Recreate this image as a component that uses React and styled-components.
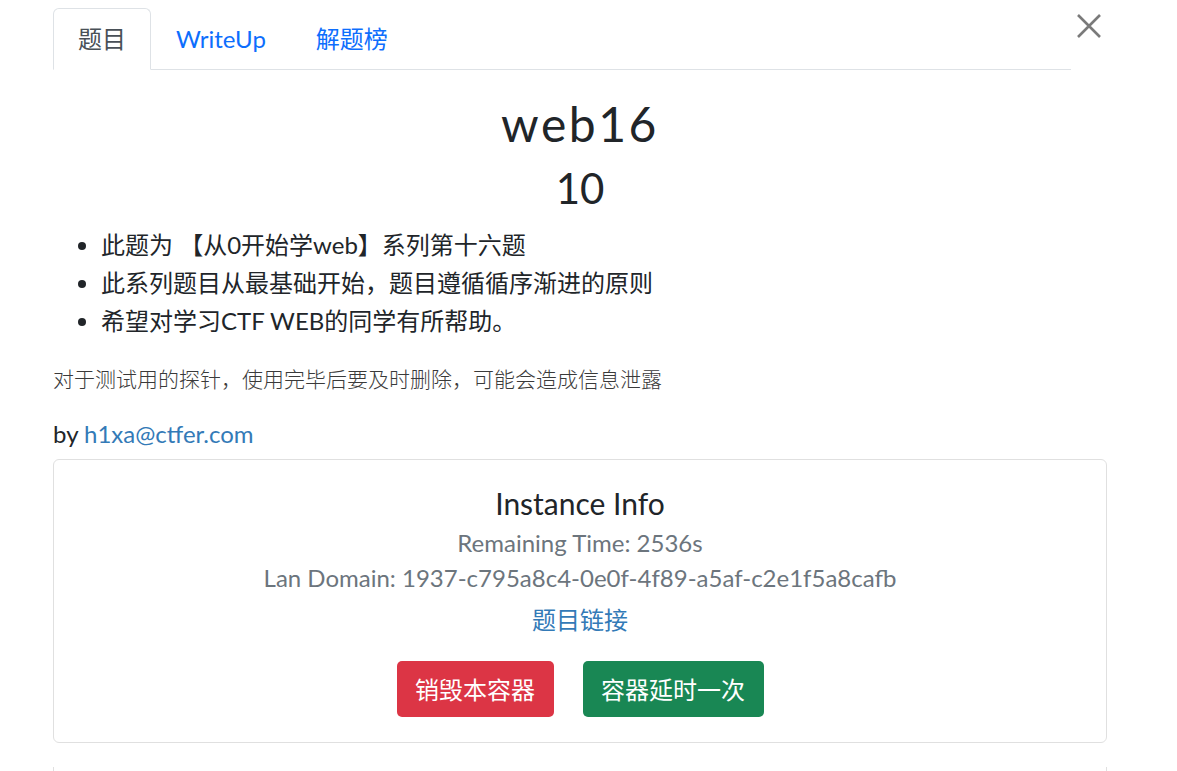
import React from 'react';
import styled, { createGlobalStyle } from 'styled-components';

const GlobalStyle = createGlobalStyle`
  body {
    margin: 0;
    background: #fff;
    font-family: Lato, "Noto Sans CJK SC", sans-serif;
    color: #212529;
  }
`;

const Page = styled.div`
  width: 1054px;
  padding: 8px 0 0 53px;
  height: 763px;
  overflow: hidden;
`;

const Header = styled.div`
  display: flex;
  align-items: flex-start;
`;

const Tabs = styled.ul`
  flex: 1;
  display: flex;
  margin: 0;
  padding: 0;
  list-style: none;
  border-bottom: 1px solid #dee2e6;
`;

const Tab = styled.li`
  margin-bottom: -1px;
  padding: 12px 24px;
  font-size: 24px;
  line-height: 36px;
  border: 1px solid ${p => (p.$active ? '#dee2e6' : 'transparent')};
  border-bottom-color: ${p => (p.$active ? '#fff' : 'transparent')};
  border-radius: 6px 6px 0 0;
  background: ${p => (p.$active ? '#fff' : 'transparent')};
  color: ${p => (p.$active ? '#495057' : '#0d6efd')};
  cursor: pointer;
`;

const CloseButton = styled.button`
  width: 36px;
  display: flex;
  justify-content: center;
  padding: 6px 0 0;
  border: 0;
  background: none;
  cursor: pointer;
`;

const Title = styled.h2`
  margin: 25px 0 0;
  text-align: center;
  font-size: 48px;
  font-weight: 400;
  line-height: 1.2;
  letter-spacing: 2.5px;
`;

const Points = styled.h3`
  margin: 10px 0 0;
  text-align: center;
  font-size: 42px;
  font-weight: 400;
  line-height: 1.2;
`;

const Bullets = styled.ul`
  margin: 13px 0 0;
  padding-left: 48px;
  font-size: 24px;
  line-height: 38px;
`;

const Note = styled.p`
  margin: 22px 0 0;
  font-family: "Noto Sans CJK SC", sans-serif;
  font-weight: 300;
  font-size: 21px;
  line-height: 32px;
  color: #3a3a3a;
`;

const Author = styled.p`
  margin: 22px 0 0;
  font-size: 24px;
  line-height: 36px;
`;

const Link = styled.a`
  color: #337ab7;
  text-decoration: none;
`;

const Card = styled.div`
  margin-top: 7px;
  border: 1px solid #e0e0e0;
  border-radius: 6px;
  padding: 25px 20px 25px;
  text-align: center;
`;

const CardTitle = styled.h5`
  margin: 0;
  font-size: 30px;
  font-weight: 400;
  line-height: 36px;
`;

const Muted = styled.div`
  font-size: 24px;
  line-height: 35px;
  color: #6c757d;
  &:first-of-type {
    margin-top: 4px;
  }
`;

const LinkRow = styled.div`
  margin-top: 7px;
  font-size: 24px;
  line-height: 36px;
`;

const Actions = styled.div`
  margin-top: 23px;
  display: flex;
  justify-content: center;
  gap: 29px;
`;

const Button = styled.button`
  height: 56px;
  padding: 0 18.5px;
  border: 0;
  border-radius: 5px;
  font-family: Lato, "Noto Sans CJK SC", sans-serif;
  font-size: 24px;
  color: #fff;
  background: ${p => (p.$variant === 'danger' ? '#dc3545' : '#198754')};
  cursor: pointer;
`;

const NextBlock = styled.div`
  margin-top: 24px;
  height: 40px;
  border-left: 1px solid #e0e0e0;
  border-right: 1px solid #e0e0e0;
`;

export default function App() {
  return (
    <>
      <GlobalStyle />
      <Page>
        <Header>
          <Tabs>
            <Tab $active>题目</Tab>
            <Tab>WriteUp</Tab>
            <Tab>解题榜</Tab>
          </Tabs>
          <CloseButton aria-label="Close">
            <svg width="24" height="24" viewBox="0 0 24 24">
              <path d="M1 1L23 23M23 1L1 23" stroke="#7a7a7a" strokeWidth="2.6" />
            </svg>
          </CloseButton>
        </Header>

        <Title>web16</Title>
        <Points>10</Points>
        <Bullets>
          <li>此题为 【从0开始学web】系列第十六题</li>
          <li>此系列题目从最基础开始，题目遵循循序渐进的原则</li>
          <li>希望对学习CTF WEB的同学有所帮助。</li>
        </Bullets>
        <Note>对于测试用的探针，使用完毕后要及时删除，可能会造成信息泄露</Note>
        <Author>
          by <Link href="#">h1xa@ctfer.com</Link>
        </Author>

        <Card>
          <CardTitle>Instance Info</CardTitle>
          <Muted>Remaining Time: 2536s</Muted>
          <Muted>Lan Domain: 1937-c795a8c4-0e0f-4f89-a5af-c2e1f5a8cafb</Muted>
          <LinkRow>
            <Link href="#">题目链接</Link>
          </LinkRow>
          <Actions>
            <Button $variant="danger">销毁本容器</Button>
            <Button $variant="success">容器延时一次</Button>
          </Actions>
        </Card>
        <NextBlock />
      </Page>
    </>
  );
}
